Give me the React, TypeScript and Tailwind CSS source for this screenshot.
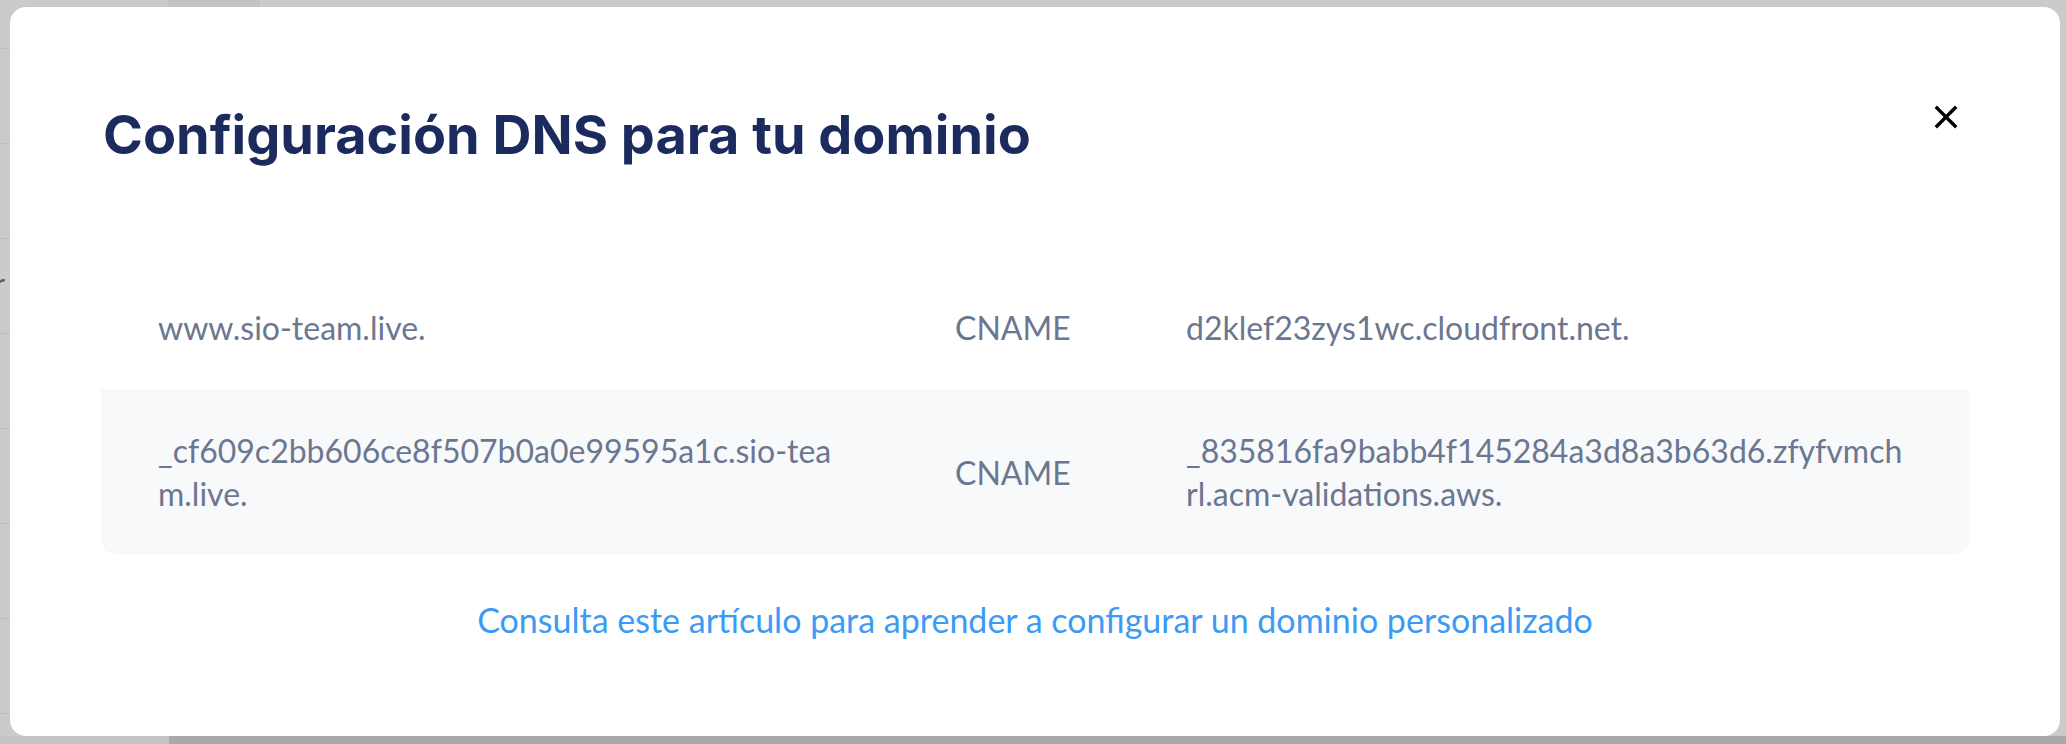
import React from "react";

const rows = [
  {
    name: "www.sio-team.live.",
    type: "CNAME",
    value: "d2klef23zys1wc.cloudfront.net.",
  },
  {
    name: "_cf609c2bb606ce8f507b0a0e99595a1c.sio-team.live.",
    type: "CNAME",
    value: "_835816fa9babb4f145284a3d8a3b63d6.zfyfvmchrl.acm-validations.aws.",
  },
];

function PageEdge() {
  return (
    <div className="w-[10px] shrink-0 overflow-hidden flex flex-col pt-[41px]">
      <div className="h-px bg-[#bdbdbd]" />
      <div className="h-[94px]" />
      <div className="h-px bg-[#bdbdbd]" />
      <div className="h-[94px]" />
      <div className="h-px bg-[#bdbdbd]" />
      <div className="h-[94px] pt-[27px] flex justify-end">
        <span
          className="text-[28px] leading-[34px] text-[#55606f] mr-[5px]"
          style={{ fontFamily: "Lato, sans-serif" }}
        >
          r
        </span>
      </div>
      <div className="h-px bg-[#bdbdbd]" />
      <div className="h-[94px]" />
      <div className="h-px bg-[#bdbdbd]" />
      <div className="h-[94px]" />
      <div className="h-px bg-[#bdbdbd]" />
      <div className="h-[94px]" />
      <div className="h-px bg-[#bdbdbd]" />
      <div className="h-[94px]" />
      <div className="h-px bg-[#bdbdbd]" />
    </div>
  );
}

export default function App() {
  return (
    <div className="w-[2066px] h-[744px] overflow-hidden bg-[#cbcbcb] flex flex-col">
      {/* strip of the page above the modal */}
      <div className="h-[7px] shrink-0 flex">
        <div className="w-[168px]" />
        <div className="w-[92px] bg-[#c1c2c6]" />
      </div>

      <div className="flex h-[729px] shrink-0">
        <PageEdge />

        {/* modal */}
        <div className="w-[2050px] h-full rounded-[16px] bg-white px-[91px] pt-[95px] flex flex-col">
          <div className="flex items-start justify-between">
            <h2
              className="pl-[2px] text-[54px] leading-[66px] font-bold text-[#1b2b5e]"
              style={{ fontFamily: "Inter, 'Liberation Sans', sans-serif" }}
            >
              Configuración DNS para tu dominio
            </h2>
            <button className="mt-[3px] mr-[11px] text-black" aria-label="Cerrar">
              <svg width="24" height="24" viewBox="0 0 24 24" fill="none">
                <path
                  d="M3 3 L21 21 M21 3 L3 21"
                  stroke="currentColor"
                  strokeWidth="3.4"
                  strokeLinecap="square"
                />
              </svg>
            </button>
          </div>

          <div
            className="mt-[98px] rounded-[16px] overflow-hidden text-[#6b7791] text-[32px] leading-[43px]"
            style={{ fontFamily: "Lato, 'Open Sans', sans-serif" }}
          >
            {rows.map((r, i) => (
              <div
                key={r.name}
                className={`grid grid-cols-[797px_231px_1fr] items-center pl-[57px] pr-[58px] py-[40px] ${
                  i % 2 === 1 ? "bg-[#f8f9fb]" : "bg-white"
                }`}
              >
                <div className="pr-[91px] break-all">{r.name}</div>
                <div>{r.type}</div>
                <div className="break-all">{r.value}</div>
              </div>
            ))}
          </div>

          <div
            className="mt-[43px] text-center text-[34px] leading-[43px] text-[#3b9bf4]"
            style={{ fontFamily: "Lato, 'Open Sans', sans-serif" }}
          >
            <a href="#">Consulta este artículo para aprender a configurar un dominio personalizado</a>
          </div>
        </div>

        <div className="flex-1" />
      </div>

      {/* page below the modal */}
      <div className="h-[8px] shrink-0 flex">
        <div className="w-[169px] bg-[#c3c3c3]" />
        <div className="flex-1 bg-[#a9a9ab]" />
      </div>
    </div>
  );
}
